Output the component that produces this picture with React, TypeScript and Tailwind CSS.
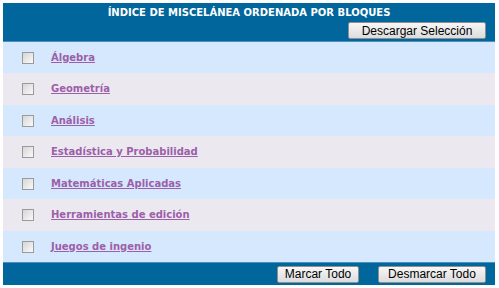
import React from 'react';

const bloques = [
  'Álgebra',
  'Geometría',
  'Análisis',
  'Estadística y Probabilidad',
  'Matemáticas Aplicadas',
  'Herramientas de edición',
  'Juegos de ingenio',
];

const rowHeights = ['h-[31px]', 'h-[32px]', 'h-[31px]', 'h-[32px]', 'h-[31px]', 'h-[32px]', 'h-[31px]'];

function GreyButton({ children, className = '' }: { children: React.ReactNode; className?: string }) {
  return (
    <button
      className={`h-[17px] flex items-center justify-center rounded-[2px] border border-[#8f8f8f] bg-gradient-to-b from-[#f7f7f7] to-[#dcdcdc] text-[12px] leading-none text-black font-['Liberation_Sans',Arial,sans-serif] ${className}`}
    >
      {children}
    </button>
  );
}

function CheckBox() {
  return (
    <span className="block w-[12px] h-[12px] border border-[#9a9a9a] bg-gradient-to-br from-[#d6d6d6] to-[#fafafa]" />
  );
}

export default function App() {
  return (
    <div className="w-[499px] h-[288px] bg-white pt-[3px] pl-[3px] font-['DejaVu_Sans',Verdana,sans-serif]">
      <div className="w-[492px] flex flex-col">
        {/* cabecera */}
        <div className="h-[39px] bg-[#00669b] flex flex-col border-b border-[#4d8fbb]">
          <div className="text-center text-white font-bold text-[10px] leading-none pt-[5px]">
            ÍNDICE DE MISCELÁNEA ORDENADA POR BLOQUES
          </div>
          <div className="flex justify-end pr-[9px] pt-[4px]">
            <GreyButton className="w-[138px]">Descargar Selección</GreyButton>
          </div>
        </div>

        {/* bloques */}
        {bloques.map((b, i) => (
          <div
            key={b}
            className={`${rowHeights[i]} flex items-center ${i % 2 === 0 ? 'bg-[#d5e8fd]' : 'bg-[#ebe9ef]'}`}
          >
            <div className="w-[48px] pl-[19px]">
              <CheckBox />
            </div>
            <a href="#" className="text-[10px] font-bold text-[#9d5fa9] underline leading-none">
              {b}
            </a>
          </div>
        ))}

        {/* pie */}
        <div className="h-[23px] bg-[#00669b] flex items-center justify-end gap-[19px] pr-[9px] border-t border-[#4d8fbb]">
          <GreyButton className="w-[82px]">Marcar Todo</GreyButton>
          <GreyButton className="w-[108px]">Desmarcar Todo</GreyButton>
        </div>
      </div>
    </div>
  );
}
